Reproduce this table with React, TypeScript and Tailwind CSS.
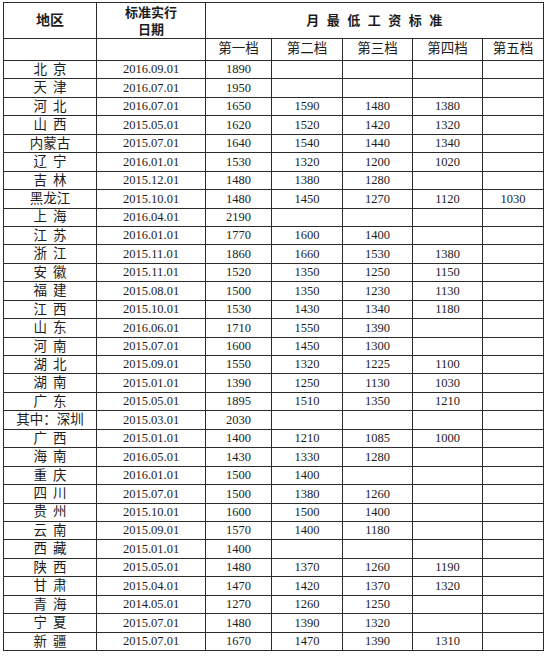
import React from 'react';

type Row = [string, string, ...string[]];

const rows: Row[] = [
  ['北京', '2016.09.01', '1890'],
  ['天津', '2016.07.01', '1950'],
  ['河北', '2016.07.01', '1650', '1590', '1480', '1380'],
  ['山西', '2015.05.01', '1620', '1520', '1420', '1320'],
  ['内蒙古', '2015.07.01', '1640', '1540', '1440', '1340'],
  ['辽宁', '2016.01.01', '1530', '1320', '1200', '1020'],
  ['吉林', '2015.12.01', '1480', '1380', '1280'],
  ['黑龙江', '2015.10.01', '1480', '1450', '1270', '1120', '1030'],
  ['上海', '2016.04.01', '2190'],
  ['江苏', '2016.01.01', '1770', '1600', '1400'],
  ['浙江', '2015.11.01', '1860', '1660', '1530', '1380'],
  ['安徽', '2015.11.01', '1520', '1350', '1250', '1150'],
  ['福建', '2015.08.01', '1500', '1350', '1230', '1130'],
  ['江西', '2015.10.01', '1530', '1430', '1340', '1180'],
  ['山东', '2016.06.01', '1710', '1550', '1390'],
  ['河南', '2015.07.01', '1600', '1450', '1300'],
  ['湖北', '2015.09.01', '1550', '1320', '1225', '1100'],
  ['湖南', '2015.01.01', '1390', '1250', '1130', '1030'],
  ['广东', '2015.05.01', '1895', '1510', '1350', '1210'],
  ['其中：深圳', '2015.03.01', '2030'],
  ['广西', '2015.01.01', '1400', '1210', '1085', '1000'],
  ['海南', '2016.05.01', '1430', '1330', '1280'],
  ['重庆', '2016.01.01', '1500', '1400'],
  ['四川', '2015.07.01', '1500', '1380', '1260'],
  ['贵州', '2015.10.01', '1600', '1500', '1400'],
  ['云南', '2015.09.01', '1570', '1400', '1180'],
  ['西藏', '2015.01.01', '1400'],
  ['陕西', '2015.05.01', '1480', '1370', '1260', '1190'],
  ['甘肃', '2015.04.01', '1470', '1420', '1370', '1320'],
  ['青海', '2014.05.01', '1270', '1260', '1250'],
  ['宁夏', '2015.07.01', '1480', '1390', '1320'],
  ['新疆', '2015.07.01', '1670', '1470', '1390', '1310'],
];

const levels = ['第一档', '第二档', '第三档', '第四档', '第五档'];

const cell = 'border border-[#2b2b2b] p-0 text-center align-middle';

export default function App() {
  return (
    <div className="min-h-screen bg-white pl-[3px] pt-[2px] text-[#1c1c1c] [font-family:'Liberation_Serif','Noto_Sans_CJK_SC',serif]">
      <table className="w-[540px] table-fixed border-collapse border border-[#2b2b2b]">
        <colgroup>
          <col className="w-[93px]" />
          <col className="w-[109px]" />
          <col className="w-[66px]" />
          <col className="w-[71px]" />
          <col className="w-[70px]" />
          <col className="w-[70px]" />
          <col className="w-[61px]" />
        </colgroup>
        <thead>
          <tr className="h-[36px]">
            <th className={`${cell} text-[14px] font-bold`}>地区</th>
            <th className={`${cell} text-[13px] font-bold leading-[17px]`}>
              标准实行
              <br />
              日期
            </th>
            <th colSpan={5} className={`${cell} pl-[7px] text-[13px] font-bold tracking-[7.5px]`}>
              月最低工资标准
            </th>
          </tr>
          <tr className="h-[22px]">
            <th className={cell}></th>
            <th className={cell}></th>
            {levels.map((l) => (
              <th key={l} className={`${cell} text-[13.5px] font-normal`}>
                {l}
              </th>
            ))}
          </tr>
        </thead>
        <tbody>
          {rows.map(([name, date, ...vals]) => (
            <tr key={name} className="h-[18.44px]">
              <td
                className={`${cell} text-[13.5px] leading-none ${
                  name.length === 2 ? 'pl-[6px] tracking-[6px]' : ''
                }`}
              >
                {name}
              </td>
              <td className={`${cell} text-[12.5px] leading-none`}>{date}</td>
              {[0, 1, 2, 3, 4].map((i) => (
                <td key={i} className={`${cell} text-[12.5px] leading-none`}>
                  {vals[i] ?? ''}
                </td>
              ))}
            </tr>
          ))}
        </tbody>
      </table>
    </div>
  );
}
